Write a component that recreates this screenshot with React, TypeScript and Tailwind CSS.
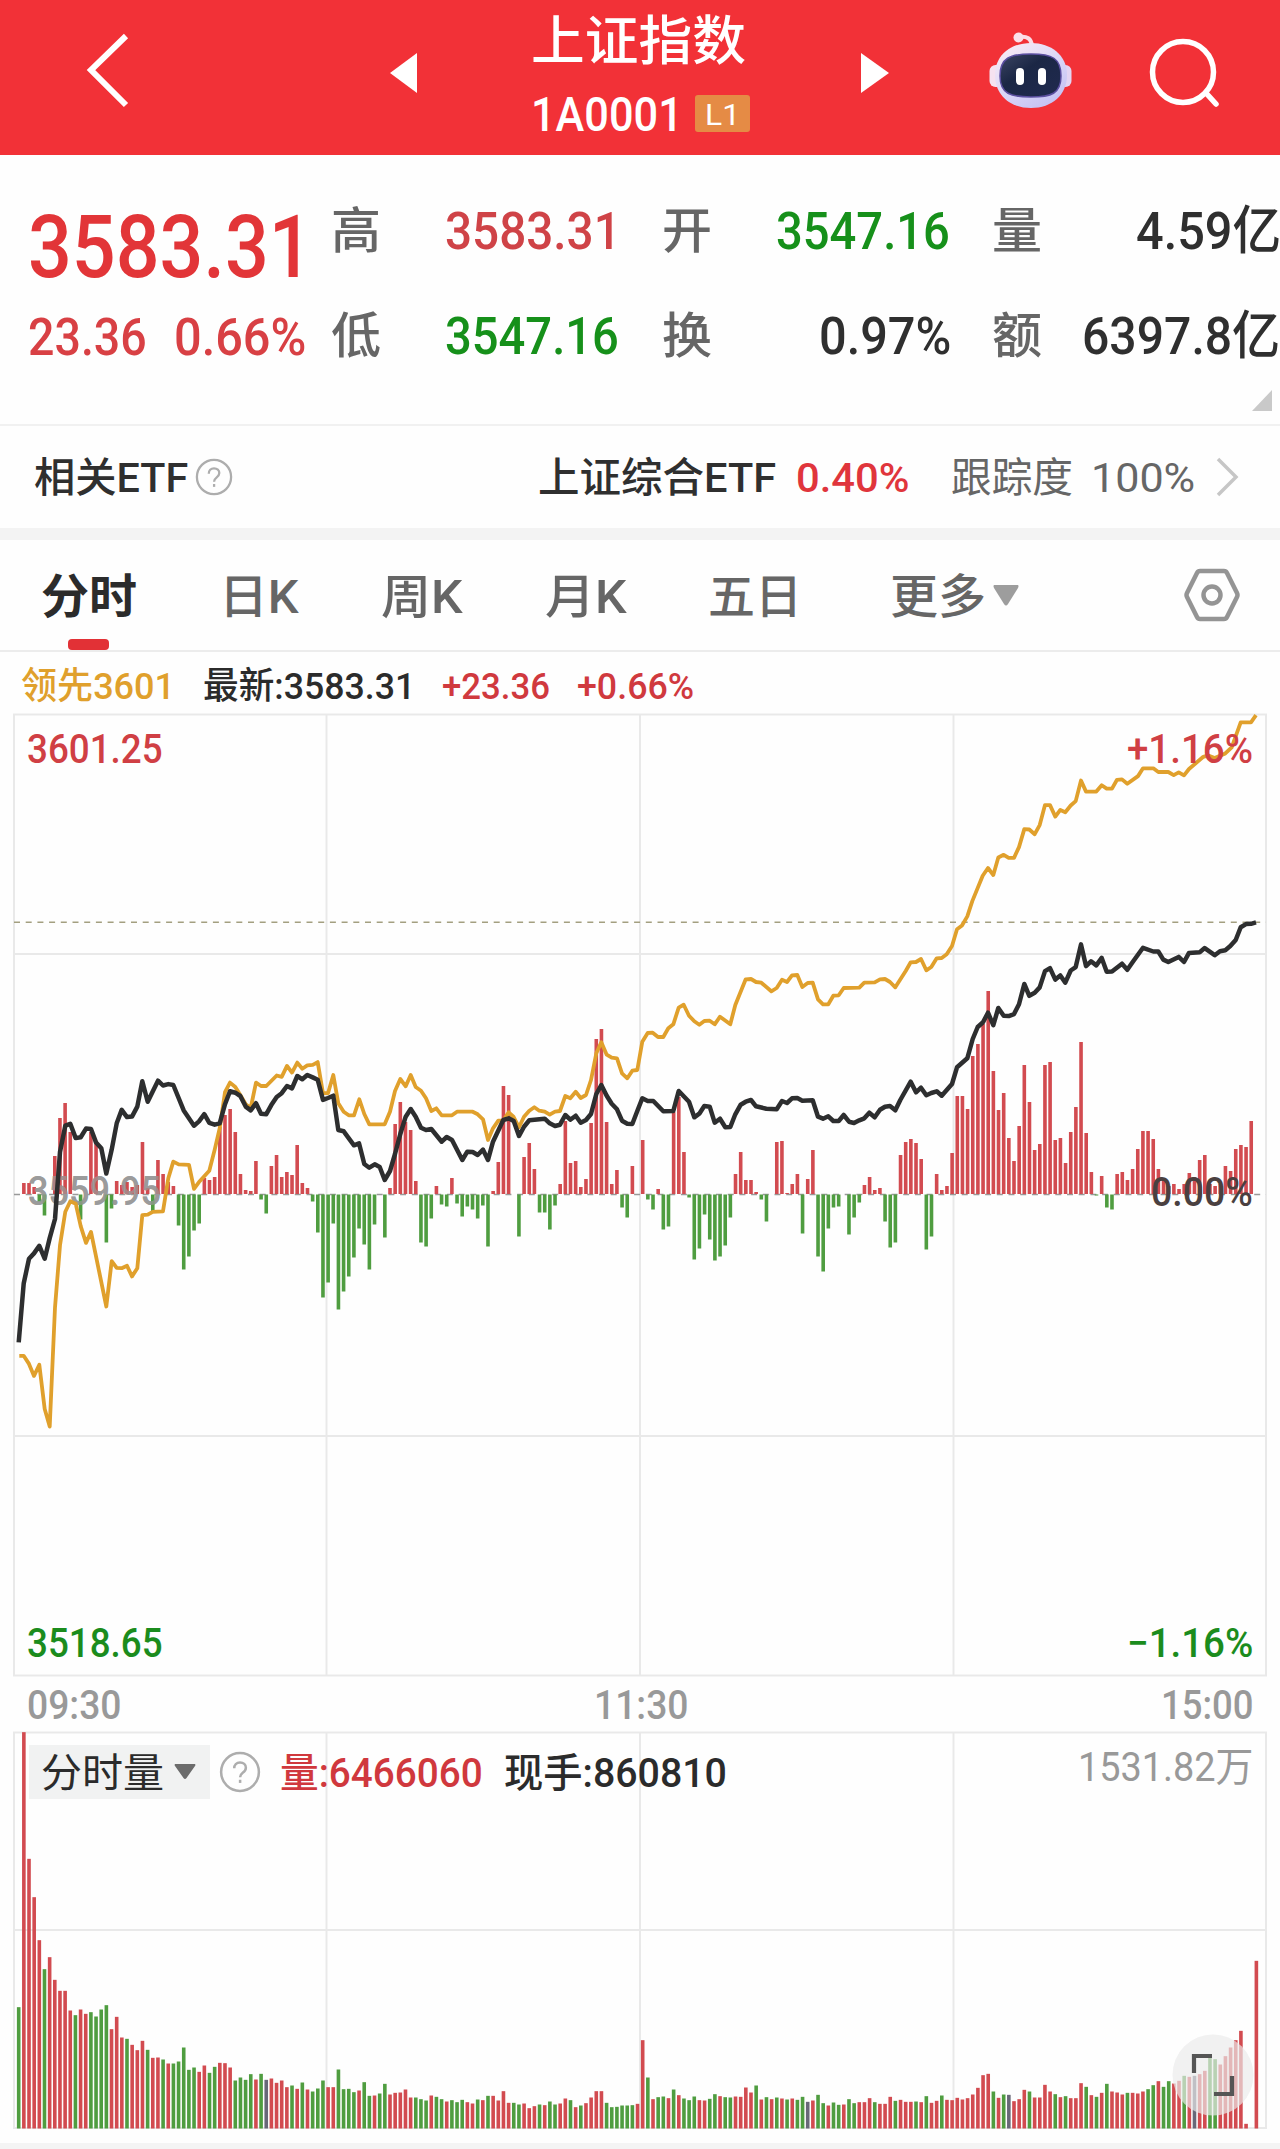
import { useLayoutEffect, useRef, useState } from 'react';
import type { ReactNode } from 'react';

/** Text stretched or condensed horizontally to fill the width of its box. */
function Fit({ className, children }: { className: string; children: ReactNode }) {
  const box = useRef<HTMLDivElement>(null);
  const text = useRef<HTMLSpanElement>(null);
  const [scale, setScale] = useState(1);
  useLayoutEffect(() => {
    if (box.current && text.current && text.current.offsetWidth) {
      setScale(box.current.clientWidth / text.current.offsetWidth);
    }
  }, []);
  return (
    <div ref={box} className={`shrink-0 whitespace-nowrap pt-[3px] leading-none ${className}`}>
      <span ref={text} className="inline-block origin-left" style={{ transform: `scaleX(${scale})` }}>
        {children}
      </span>
    </div>
  );
}

const RED = '#d24b50';
const GREEN = '#4f9d40';
const STEP = 5.157;
const X0 = 18.7;

/** Momentum bars, one per minute, in pixels above or below the zero line. */
const MOMENTUM = [
  0, 11, 11, 7, -7, -21, 0, 38, 76, 91, 62, 0, -25, 0, 62, 50, 0, -48, -14, 13, 9, 12, 7, 9, 52, 6, -17, 34, 20, 12,
  8, -31, -75, -62, -36, -29, 16, 14, 17, 67, 79, 85, 62, 20, 4, 3, 33, -5, -19, 28, 39, 17, 22, 19, 49, 11, 6, -7,
  -38, -103, -88, -29, -115, -97, -82, -63, -34, -50, -75, -30, 0, -43, 6, 70, 92, 72, 64, 13, -48, -52, -24, 8, -10,
  -12, 16, -9, -22, -12, -15, -24, -11, -52, 3, 32, 108, 99, 0, -42, 37, 51, 25, -18, -18, -35, -11, 10, 73, 31, 33,
  7, 15, 71, 155, 165, 72, 10, 24, -13, -23, 28, 0, 54, -5, -15, 5, -35, -32, 82, 97, 42, -3, -65, -54, -20, -45,
  -66, -62, -51, -23, 20, 42, 14, 14, 2, -5, -27, 0, 52, 53, 1, 10, 20, -39, 15, 44, -62, -77, -34, -13, -12, 0, -40,
  -23, -8, 9, 17, 4, 6, -27, -53, -48, 39, 52, 55, 51, 35, -55, -42, 20, 4, 8, 41, 98, 98, 85, 138, 150, 170, 203,
  123, 84, 101, 56, 33, 68, 129, 92, 44, 50, 129, 132, 54, 56, 31, 62, 87, 152, 61, 22, -1, 18, -13, -15, 20, 22, 14,
  25, 45, 63, 63, 55, 25, 15, 8, 10, 5, 10, 21, 17, 34, 39, 10, 8, 10, 28, 23, 45, 49, 47, 73,
];

type Tile = { x: number; y: number; sy: number; pts: string };

const PRICE: Tile[] = [
  {
    x: 0, y: 700, sy: 2.0907,
    pts: '56,1343 71,1220 87,1168 102,1157 118,1141 134,1168 149,1125 165,1085 180,945 196,890 211,886 227,916 242,914 258,896 273,897 288,925 304,937 319,990 335,940 350,885 365,857 381,872 396,871 412,850 427,797 443,840 474,796 489,806 505,803 520,805 551,858 582,890 597,881 613,866 628,884 644,888 659,885 675,845 690,818 706,821 721,828 737,850 752,858 768,843 783,865 799,866 814,847 830,830 845,822 861,807 876,812 892,786 907,793 922,784 938,789 953,794 969,836 984,832',
  },
  {
    x: 320, y: 1000, sy: 3,
    pts: '40,287 55,390 71,394 102,436 117,430 133,492 148,503 164,493 179,501 194,540 210,513 225,462 241,402 257,350 272,327 287,350 303,383 318,390 334,387 365,425 380,411 396,420 427,480 442,455 458,456 473,465 489,449 504,480 519,425 550,360 566,355 581,363 597,408 612,380 628,361 674,356 689,370 705,378 720,374 736,345 751,359 767,347 782,368 798,360 813,342 829,282 844,255 860,287 875,311 891,328 906,362 922,371 937,372 952,333',
  },
  {
    x: 640, y: 900, sy: 3,
    pts: '7,595 23,603 40,603 70,634 100,633 116,573 147,605 163,652 178,641 193,618 209,620 224,668 240,656 256,682 271,681 286,643 302,614 317,605 333,600 348,619 379,626 410,628 426,603 441,609 456,595 472,594 487,602 518,601 534,650 549,656 565,649 580,663 596,663 611,645 627,665 642,669 658,661 673,655 688,638 704,652 720,629 735,620 750,618 766,631 781,600 812,545 828,577 843,563 859,586 874,579 890,574 905,587 936,552 951,502 982,475 998,417 1013,381 1029,367',
  },
  {
    x: 920, y: 700, sy: 2.958,
    pts: '204,925 220,962 235,911 251,934 266,935 282,929 297,900 313,840 328,875 344,866 359,850 375,802 390,793 406,827 421,815 436,836 452,800 467,790 483,723 498,787 513,773 529,785 545,763 560,804 576,803 606,780 622,798 638,775 669,733 700,744 715,744 730,768 745,775 776,760 792,775 807,748 839,746 854,734 884,755 900,743 916,740 931,728 947,710 962,672 978,663 993,662 1008,658',
  },
];

const LEAD: Tile[] = [
  {
    x: 0, y: 700, sy: 2.0907,
    pts: '58,1371 71,1371 87,1388 102,1413 118,1390 134,1482 149,1519 165,1270 180,1140 196,1070 211,1048 227,1053 242,1100 258,1135 273,1112 319,1268 335,1173 350,1187 365,1188 381,1183 396,1205 412,1188 427,1077 443,1076 458,1070 489,1069 505,1000 520,965 536,971 567,972 582,1022 597,1008 628,984 644,940 659,895 675,820 690,800 706,809 721,826 737,845 752,853 768,800 783,807 799,807 830,785 845,788 861,765 876,779 892,758 907,771 922,764 938,763 953,757 969,822 984,822',
  },
  {
    x: 320, y: 1000, sy: 3,
    pts: '40,225 55,310 71,335 86,346 102,346 118,298 133,342 148,373 194,373 210,335 225,273 241,237 257,259 272,225 287,261 303,272 318,295 334,333 349,325 365,346 396,346 411,335 458,335 473,343 489,358 504,420 519,385 535,362 550,361 566,337 581,351 597,382 612,350 628,332 643,322 658,332 674,335 689,344 705,335 720,333 736,288 751,295 767,275 782,294 798,285 813,240 829,160 844,127 860,164 875,173 891,175 906,220 922,235 937,212 952,210',
  },
  {
    x: 640, y: 900, sy: 3,
    pts: '7,425 23,399 38,398 54,411 70,411 85,385 100,373 116,323 131,314 147,347 163,364 178,374 193,363 209,362 224,373 240,350 271,373 286,315 317,238 333,237 348,246 364,248 394,274 410,264 426,239 441,246 456,226 472,225 487,261 503,249 518,248 534,298 549,313 565,313 580,287 596,286 611,264 658,263 673,248 704,247 720,238 735,237 750,246 766,262 797,213 812,187 828,186 843,177 859,211 874,201 890,175 905,174 920,163 936,138',
  },
  {
    x: 920, y: 700, sy: 2.958,
    pts: '111,678 126,667 142,640 157,595 188,520 204,497 220,518 235,466 251,458 266,467 282,467 297,435 313,382 328,383 344,397 359,370 375,311 390,311 406,345 421,325 436,332 452,312 467,299 483,238 498,271 529,271 545,252 560,262 576,262 591,236 606,235 622,248 654,225 669,202 700,202 715,213 745,213 761,222 776,214 792,223 807,204 850,168 865,164 884,172 916,158 935,140 962,66 993,66 1008,45',
  },
];

function toPoints(tiles: Tile[]) {
  return tiles
    .map((t) =>
      t.pts
        .split(' ')
        .map((p) => {
          const [a, b] = p.split(',').map(Number);
          return `${(t.x + a / 3).toFixed(1)},${(t.y + b / t.sy).toFixed(1)}`;
        })
        .join(' '),
    )
    .join(' ');
}

/** Volume bars: direction letter (R up, G down, N flat) and height in thirds of a pixel. */
const VOLUME =
  'G364 R1189 R809 R694 R565 G478 R514 R446 R413 R413 R354 G340 R357 R344 G349 G336 G357 G370 R298 R335 R273 G269 R251 R235 R263 G236 R212 R213 G207 R195 G195 G201 G243 G176 G183 R170 R189 G167 G185 R197 R196 R183 G144 G153 G146 G163 R147 G164 N146 R150 R137 R144 R124 G129 R119 G138 R117 G111 G120 G144 R124 R124 G177 G118 G119 G109 R114 G139 G98 R99 G105 G134 R102 R107 R108 R117 R93 G93 G88 G84 ' +
  'R99 G95 G88 R81 G85 G79 G86 R79 R75 G87 R85 G98 R98 R84 R112 R77 G77 G72 R75 R61 R67 G72 R70 G81 G72 R75 R90 G85 R64 G69 R76 R93 R112 R112 G77 G64 G65 G69 G69 G70 R74 R265 G153 R88 G94 G96 R91 G117 R100 G90 G85 G96 R85 R84 G89 G103 R97 G94 G93 R96 R95 R123 R108 G129 R87 G94 R88 G93 R90 G87 R90 G86 G95 N80 R84 G101 G76 R69 G78 G71 R72 G88 ' +
  'G76 R79 R79 R91 G79 R74 R74 R95 G83 R86 R80 R80 G81 R79 G97 R77 R83 G99 R86 R85 R92 R87 R91 R102 R122 R160 R164 G111 R92 G102 N101 R82 R88 R116 G111 R93 R93 R131 R111 G103 R94 G97 R91 R91 R136 G125 R100 G95 R107 G134 R111 R108 R102 G107 R107 R105 R111 G118 G130 R142 G125 G142 R135 R143 G158 R155 N158 R163 R173 G215 G208 R192 R217 R243 R265 R293 R14 R0 R503';

const VOL_COLOR: Record<string, string> = { R: RED, G: GREEN, N: '#686878' };

function Help({ className }: { className: string }) {
  return (
    <svg viewBox="0 0 40 40" className={`shrink-0 ${className}`} fill="none" stroke="#adadad" strokeWidth="2.4">
      <circle cx="20" cy="20" r="18" />
      <path d="M14.5 16.5c0-3.4 2.2-5.6 5.5-5.6s5.6 2 5.6 5c0 2.4-1.2 3.5-3 4.8-1.8 1.300-2.500 2.300-2.500 4.400" />
      <path d="M20.100 27.400v3" />
    </svg>
  );
}

function Robot() {
  return (
    <svg width="84" height="78" viewBox="0 0 84 78" className="ml-[100px] shrink-0">
      <defs>
        <linearGradient id="shell" x1="0" y1="0" x2="0.7" y2="1">
          <stop offset="0" stopColor="#ffeef4" />
          <stop offset="0.55" stopColor="#dcd8f7" />
          <stop offset="1" stopColor="#c5c2f4" />
        </linearGradient>
        <linearGradient id="face" x1="0" y1="0" x2="1" y2="1">
          <stop offset="0" stopColor="#3c4563" />
          <stop offset="0.4" stopColor="#1b2745" />
          <stop offset="1" stopColor="#202a50" />
        </linearGradient>
      </defs>
      <path d="M30 6q12-2 13 9" fill="none" stroke="#fbdde6" strokeWidth="4" />
      <circle cx="29.500" cy="6.500" r="5" fill="#fbe0ea" />
      <rect x="0.500" y="34" width="14" height="22" rx="6" fill="#f6e2f0" />
      <rect x="68.500" y="34" width="14" height="22" rx="6" fill="#e3d5f3" />
      <path d="M42 12C62 12 78 24 78 44S63 77 42 77 6 64 6 44 22 12 42 12Z" fill="url(#shell)" />
      <path
        d="M42 23C63 23 72 27 72 45S62 66 42 66 11 63 11 45 21 23 42 23Z"
        fill="url(#face)" stroke="#5b4fa0" strokeWidth="1.5"
      />
      <rect x="27" y="37" width="8" height="17" rx="4" fill="#fff" />
      <rect x="49" y="37" width="8" height="17" rx="4" fill="#fff" />
    </svg>
  );
}

function Header() {
  return (
    <header className="flex h-[155px] items-start bg-[#f23137] text-white">
      <svg width="46" height="78" viewBox="0 0 46 78" className="ml-[83px] mt-[31px] shrink-0">
        <path d="M43 5 8 39 43 74" fill="none" stroke="#fff" strokeWidth="6" />
      </svg>
      <svg width="28" height="40" viewBox="0 0 28 40" className="ml-[261px] mt-[53px] shrink-0">
        <path d="M27 0v40L0 20Z" fill="#fff" />
      </svg>
      <div className="ml-[113px] flex w-[222px] shrink-0 flex-col">
        <Fit className="mt-[13px] w-[215px] text-[53px]">上证指数</Fit>
        <div className="mt-[19px] flex h-[50px] items-center">
          <Fit className="w-[152px] text-[49px]">1A0001</Fit>
          <div className="ml-[12px] flex h-[37px] w-[55px] items-center justify-center rounded-[3px] bg-[#e58b45]">
            <Fit className="w-[35px] text-[30px] font-normal">L1</Fit>
          </div>
        </div>
      </div>
      <svg width="28" height="40" viewBox="0 0 28 40" className="ml-[108px] mt-[53px] shrink-0">
        <path d="M0 0v40L28 20Z" fill="#fff" />
      </svg>
      <div className="mt-[31px] flex">
        <Robot />
        <svg width="76" height="78" viewBox="0 0 76 78" className="ml-[72px] shrink-0">
          <g fill="none" stroke="#fff" strokeWidth="5.500" strokeLinecap="round">
            <circle cx="38" cy="41" r="30.500" />
            <path d="m61 62 10 11" />
          </g>
        </svg>
      </div>
    </header>
  );
}

function Quote() {
  return (
    <section className="flex h-[269px] flex-col text-[52px] text-[#2f2f2f]">
      <div className="flex">
        <div className="w-[331px] shrink-0 pl-[28px] text-[#d84044]">
          <Fit className="mt-[45px] w-[285px] text-[88px] text-[#e23538]">3583.31</Fit>
          <div className="mt-[18px] flex">
            <Fit className="w-[119px]">23.36</Fit>
            <Fit className="ml-[27px] w-[132px]">0.66%</Fit>
          </div>
        </div>
        <div className="flex flex-1 flex-col">
          <div className="mt-[48px] flex h-[54px] items-center">
            <Fit className="w-[50px] text-[49px] text-[#666]">高</Fit>
            <Fit className="ml-[64px] w-[176px] text-[#cf4347]">3583.31</Fit>
            <Fit className="ml-[41px] w-[50px] text-[49px] text-[#666]">开</Fit>
            <Fit className="ml-[64px] w-[174px] text-[#16901a]">3547.16</Fit>
            <Fit className="ml-[42px] w-[50px] text-[49px] text-[#666]">量</Fit>
            <Fit className="ml-[94px] w-[145px]">4.59亿</Fit>
          </div>
          <div className="mt-[51px] flex h-[54px] items-center">
            <Fit className="w-[50px] text-[49px] text-[#666]">低</Fit>
            <Fit className="ml-[64px] w-[174px] text-[#16901a]">3547.16</Fit>
            <Fit className="ml-[43px] w-[50px] text-[49px] text-[#666]">换</Fit>
            <Fit className="ml-[107px] w-[132px]">0.97%</Fit>
            <Fit className="ml-[41px] w-[50px] text-[49px] text-[#666]">额</Fit>
            <Fit className="ml-[40px] w-[198px]">6397.8亿</Fit>
          </div>
        </div>
      </div>
      <svg width="20" height="21" viewBox="0 0 20 21" className="ml-auto mr-[8px] mt-[26px]">
        <path d="M20 0v21H0Z" fill="#c9c9c9" />
      </svg>
    </section>
  );
}

function EtfRow() {
  return (
    <section className="flex h-[104px] items-center border-t-2 border-[#f1f1f1] text-[41px] text-[#2f2f2f]">
      <Fit className="ml-[34px] w-[154px]">相关ETF</Fit>
      <Help className="ml-[7px] size-[38px]" />
      <Fit className="ml-[305px] w-[238px]">上证综合ETF</Fit>
      <Fit className="ml-[20px] w-[114px] text-[#e0353c]">0.40%</Fit>
      <Fit className="ml-[41px] w-[122px] font-normal text-[#666]">跟踪度</Fit>
      <Fit className="ml-[18px] w-[104px] font-normal text-[#666]">100%</Fit>
      <svg width="24" height="40" viewBox="0 0 24 40" className="ml-[21px] shrink-0">
        <path d="M2 2 20 20 2 38" fill="none" stroke="#c6c6c6" strokeWidth="3.500" />
      </svg>
    </section>
  );
}

function Tabs() {
  return (
    <nav className="flex h-[112px] items-center border-b-2 border-[#ececec] text-[47px] text-[#666]">
      <div className="relative ml-[41px]">
        <Fit className="w-[96px] font-bold text-[#2b2b2b]">分时</Fit>
        <div className="absolute left-[27px] top-[69px] h-[11px] w-[41px] rounded-[4px] bg-[#e23136]" />
      </div>
      <Fit className="ml-[82px] w-[80px]">日K</Fit>
      <Fit className="ml-[82px] w-[82px]">周K</Fit>
      <Fit className="ml-[82px] w-[82px]">月K</Fit>
      <Fit className="ml-[81px] w-[94px]">五日</Fit>
      <Fit className="ml-[88px] w-[96px]">更多</Fit>
      <svg width="26" height="21" viewBox="0 0 26 21" className="ml-[7px] shrink-0">
        <path d="M1 0h24q1 1 0 3L15 19q-2 3-4 0L1 3Q0 1 1 0Z" fill="#9d9d9d" />
      </svg>
      <svg width="56" height="54" viewBox="0 0 56 54" className="ml-[165px] shrink-0">
        <g fill="none" stroke="#949494" strokeWidth="4.500" strokeLinejoin="round">
          <path d="M16 3h24q2 0 3 2l10 20q1 2 0 4L43 49q-1 2-3 2H16q-2 0-3-2L3 29q-1-2 0-4L13 5q1-2 3-2Z" />
          <circle cx="28" cy="27" r="8.500" />
        </g>
      </svg>
    </nav>
  );
}

function PriceChart() {
  return (
    <div className="relative h-[964px]">
      <svg width="1280" height="964" viewBox="0 713 1280 964" className="block">
        <g stroke="#e9e9e9" strokeWidth="2" fill="none">
          <path d="M14 714.500H1266V1675.500H14Z" />
          <path d="M14 954H1266M14 1436H1266M326.500 714V1675M640 714V1675M953.500 714V1675" />
        </g>
        <path d="M14 922.300H1266" stroke="#a39f80" strokeWidth="1.600" strokeDasharray="6 5.700" />
        <path d="M14 1194.500H1266" stroke="#999" strokeWidth="1.600" strokeDasharray="6 5.700" />
        <text
          x="28" y="1205" textLength="133" lengthAdjust="spacingAndGlyphs"
          fill="#9b9b9b" className="text-[40px] font-medium"
        >
          3559.95
        </text>
        <g>
          {MOMENTUM.map((v, i) =>
            v === 0 ? null : (
              <rect
                key={i}
                x={X0 + i * STEP - 1.8}
                y={v > 0 ? 1194 - v : 1194.5}
                width="3.600"
                height={Math.abs(v)}
                fill={v > 0 ? RED : GREEN}
              />
            ),
          )}
        </g>
        <text
          x="28" y="1205" textLength="133" lengthAdjust="spacingAndGlyphs"
          fill="#9b9b9b" fillOpacity="0.7" className="text-[40px] font-medium"
        >
          3559.95
        </text>
        <g fill="none" strokeWidth="3.800" strokeLinejoin="round">
          <polyline points={toPoints(LEAD)} stroke="#e0a02c" />
          <polyline points={toPoints(PRICE)} stroke="#2d2e2f" strokeWidth="4.500" />
        </g>
      </svg>
      <div className="absolute inset-0 flex flex-col justify-between px-[27px] pb-[13px] pt-[14px] text-[40px]">
        <div className="flex justify-between text-[#d03f44]">
          <Fit className="w-[136px]">3601.25</Fit>
          <Fit className="w-[126px]">+1.16%</Fit>
        </div>
        <Fit className="-mt-[8px] ml-auto w-[102px] text-[#4a4040]">0.00%</Fit>
        <div className="flex justify-between text-[#1b8c1d]">
          <Fit className="w-[136px]">3518.65</Fit>
          <Fit className="w-[126px]">−1.16%</Fit>
        </div>
      </div>
    </div>
  );
}

function VolumeChart() {
  return (
    <div className="relative h-[412px]">
      <svg width="1280" height="412" viewBox="0 1731 1280 412" className="block">
        <g stroke="#e9e9e9" strokeWidth="2" fill="none">
          <path d="M14 1732.500H1266V2128H14Z" />
          <path d="M14 1930H1266M326.500 1732V2128M640 1732V2128M953.500 1732V2128" />
        </g>
        {VOLUME.split(' ').map((v, i) => {
          const h = Number(v.slice(1)) / 3;
          return (
            <rect key={i} x={X0 + i * STEP - 1.8} y={2128.500 - h} width="3.600" height={h} fill={VOL_COLOR[v[0]]} />
          );
        })}
      </svg>
      <div className="absolute inset-x-0 top-[14px] flex h-[54px] items-center text-[40px] text-[#2b2b2b]">
        <div className="ml-[29px] flex h-[54px] w-[181px] shrink-0 items-center bg-[#f1f2f2]">
          <Fit className="ml-[12px] w-[123px] font-normal">分时量</Fit>
          <svg width="22" height="16" viewBox="0 0 22 16" className="ml-[10px]">
            <path d="M1 0h20q1 1 0 2L12.500 14q-1.500 2-3 0L1 2Q0 1 1 0Z" fill="#6c6c6c" />
          </svg>
        </div>
        <Help className="ml-[9px] size-[42px]" />
        <Fit className="ml-[19px] w-[203px] text-[#d0383d]">量:6466060</Fit>
        <Fit className="ml-[21px] w-[223px]">现手:860810</Fit>
        <Fit className="-mt-[12px] ml-auto mr-[27px] w-[175px] font-normal text-[#999]">1531.82万</Fit>
      </div>
      <svg width="82" height="82" viewBox="0 0 82 82" className="absolute left-[1172px] top-[303px]">
        <circle cx="41" cy="41" r="40.500" fill="#ebebeb" fillOpacity="0.68" />
        <path d="M22 39V22H40M42 60H60V42" fill="none" stroke="#555" strokeWidth="4.200" />
      </svg>
    </div>
  );
}

export default function App() {
  return (
    <main className="flex h-[2149px] w-[1280px] flex-col overflow-hidden bg-[#fefefe] font-['Roboto','Noto_Sans_CJK_SC',sans-serif] font-medium">
      <Header />
      <Quote />
      <EtfRow />
      <div className="h-[12px] shrink-0 bg-[#f3f3f3]" />
      <Tabs />
      <div className="flex h-[61px] items-center pt-[4px] text-[37px]">
        <Fit className="ml-[21px] w-[154px] text-[#e0a02c]">领先3601</Fit>
        <Fit className="ml-[28px] w-[212px] text-[#2b2b2b]">最新:3583.31</Fit>
        <Fit className="ml-[27px] w-[108px] text-[#d0393e]">+23.36</Fit>
        <Fit className="ml-[27px] w-[117px] text-[#d0393e]">+0.66%</Fit>
      </div>
      <PriceChart />
      <div className="flex h-[54px] items-center justify-between px-[27px] pt-[1px] text-[40px] text-[#999]">
        <Fit className="w-[94px]">09:30</Fit>
        <Fit className="w-[94px]">11:30</Fit>
        <Fit className="w-[92px]">15:00</Fit>
      </div>
      <VolumeChart />
      <div className="h-[6px] shrink-0 bg-[#f4f4f4]" />
    </main>
  );
}
